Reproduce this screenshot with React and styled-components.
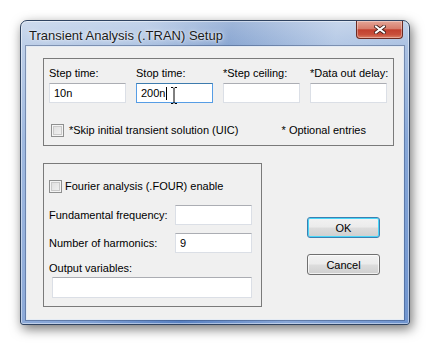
import React from 'react'
import styled, { createGlobalStyle } from 'styled-components'

const Global = createGlobalStyle`
  html, body {
    margin: 0;
    padding: 0;
    background: #ffffff;
  }
  body {
    font-family: "Liberation Sans", Arial, sans-serif;
    font-size: 11px;
    color: #000;
  }
`

const Page = styled.div`
  width: 430px;
  height: 346px;
  padding: 20px 0 0 20px;
  box-sizing: border-box;
`

const Window = styled.div`
  width: 390px;
  height: 305px;
  box-sizing: border-box;
  display: flex;
  flex-direction: column;
  padding: 0 5px 4px 5px;
  border: 1px solid #2f4361;
  border-radius: 7px 7px 3px 3px;
  background:
    linear-gradient(100deg, rgba(255, 255, 255, 0.35) 0%, rgba(255, 255, 255, 0.2) 28%, rgba(40, 80, 150, 0.15) 48%, rgba(255, 255, 255, 0.25) 72%, rgba(255, 255, 255, 0.1) 100%),
    linear-gradient(to bottom, #b4c8e5 0px, #9ab5dc 26px, #7399d2 120px, #5f88c9 100%);
  box-shadow: 2px 4px 12px rgba(0, 0, 0, 0.55), inset 0 0 0 1px rgba(255, 255, 255, 0.45);
`

const TitleBar = styled.div`
  height: 25px;
  display: flex;
  align-items: flex-start;
  justify-content: space-between;
`

const Title = styled.div`
  font-size: 13px;
  line-height: 13px;
  margin: 8px 0 0 3px;
  color: #1a1a1a;
  text-shadow: 0 0 6px rgba(255, 255, 255, 0.9), 0 0 2px rgba(255, 255, 255, 0.9);
`

const CloseButton = styled.div`
  width: 47px;
  height: 18px;
  box-sizing: border-box;
  margin-right: 1px;
  display: flex;
  align-items: center;
  justify-content: center;
  border: 1px solid #6b2a22;
  border-top: none;
  border-radius: 0 0 4px 4px;
  background: linear-gradient(to bottom, #e4a597 0%, #d77d6c 45%, #c2402f 52%, #c8503c 80%, #dd8066 100%);
  box-shadow: inset 0 0 0 1px rgba(255, 255, 255, 0.35);
`

const Client = styled.div`
  flex: 1;
  display: flex;
  flex-direction: column;
  background: #f0f0f0;
  border: 1px solid #e4ebf4;
  box-shadow: 0 0 0 1px rgba(40, 60, 100, 0.4);
  padding: 11px 0 0 16px;
`

const Group = styled.div`
  width: ${p => p.$w}px;
  height: ${p => p.$h}px;
  box-sizing: border-box;
  border: 1px solid #7a7a7a;
  padding: ${p => p.$pad};
  display: flex;
  flex-direction: column;
`

const FieldGrid = styled.div`
  display: grid;
  grid-template-columns: repeat(4, 77px);
  column-gap: 10px;
`

const Field = styled.div`
  display: flex;
  flex-direction: column;
`

const Label = styled.div`
  line-height: 14px;
  white-space: nowrap;
  margin-bottom: ${p => p.$mb || 0}px;
`

const InputWrap = styled.div`
  position: relative;
`

const Input = styled.div`
  width: ${p => p.$w || 77}px;
  height: ${p => p.$h || 20}px;
  box-sizing: border-box;
  background: #fff;
  border: 1px solid ${p => (p.$focus ? '#569de5' : '#dbdfe6')};
  border-top-color: ${p => (p.$focus ? '#3d7bad' : '#abadb3')};
  padding: 0 4px;
  display: flex;
  align-items: center;
  line-height: 14px;
  margin-left: ${p => p.$ml || 0}px;
`

const Caret = styled.span`
  display: inline-block;
  width: 1px;
  height: 13px;
  background: #000;
  margin-left: 1px;
`

const Cursor = styled.svg`
  position: absolute;
  left: 34px;
  top: 4px;
`

const CheckRow = styled.div`
  display: flex;
  align-items: center;
  justify-content: space-between;
  margin-top: ${p => p.$mt}px;
  padding-left: ${p => p.$pl || 0}px;
  padding-right: ${p => p.$pr || 0}px;
`

const CheckLabel = styled.label`
  display: flex;
  align-items: center;
  gap: ${p => p.$gap}px;
  line-height: 14px;
  white-space: nowrap;
`

const Box = styled.span`
  width: 13px;
  height: 13px;
  box-sizing: border-box;
  border: 1px solid #8e8f8f;
  background: linear-gradient(135deg, #dcdcdc 0%, #f4f4f4 100%);
  box-shadow: inset 0 0 0 1px #f4f4f4, inset 0 0 0 2px #c9c9c9;
`

const LowerRow = styled.div`
  display: flex;
  margin-top: 17px;
`

const FormRow = styled.div`
  display: flex;
  align-items: center;
  justify-content: space-between;
  margin-top: ${p => p.$mt}px;
`

const ButtonColumn = styled.div`
  display: flex;
  flex-direction: column;
  gap: 16px;
  margin: 54px 0 0 45px;
`

const Button = styled.div`
  width: 73px;
  height: 21px;
  box-sizing: border-box;
  display: flex;
  align-items: center;
  justify-content: center;
  border: 1px solid ${p => (p.$default ? '#3c7fb1' : '#707070')};
  border-radius: 3px;
  background: linear-gradient(to bottom, #f2f2f2 0%, #ebebeb 49%, #dddddd 51%, #cfcfcf 100%);
  box-shadow: inset 0 0 0 1px ${p => (p.$default ? '#48d6f8' : 'rgba(255, 255, 255, 0.7)')};
  font-size: 11px;
`

const App = () => {
  return (
    <Page>
      <Global />
      <Window>
        <TitleBar>
          <Title>Transient Analysis (.TRAN) Setup</Title>
          <CloseButton>
            <svg width="12" height="9" viewBox="0 0 12 9">
              <path d="M2 1.5 L10 7.5 M10 1.5 L2 7.5" stroke="#3b1a16" strokeWidth="3.6" strokeLinecap="square" />
              <path d="M2 1.5 L10 7.5 M10 1.5 L2 7.5" stroke="#ffffff" strokeWidth="2" strokeLinecap="square" />
            </svg>
          </CloseButton>
        </TitleBar>
        <Client>
          <Group $w={351} $h={88} $pad="7px 0 0 5px">
            <FieldGrid>
              <Field>
                <Label $mb={3}>Step time:</Label>
                <Input>10n</Input>
              </Field>
              <Field>
                <Label $mb={3}>Stop time:</Label>
                <InputWrap>
                  <Input $focus>200n<Caret /></Input>
                  <Cursor width="8" height="17" viewBox="0 0 8 17">
                    <path d="M1 0.5 H3 L4 1.5 L5 0.5 H7 M4 1.5 V15.5 M1 16.5 H3 L4 15.5 L5 16.5 H7" stroke="#000" strokeWidth="1" fill="none" />
                  </Cursor>
                </InputWrap>
              </Field>
              <Field>
                <Label $mb={3}>*Step ceiling:</Label>
                <Input />
              </Field>
              <Field>
                <Label $mb={3}>*Data out delay:</Label>
                <Input />
              </Field>
            </FieldGrid>
            <CheckRow $mt={20} $pl={2} $pr={27}>
              <CheckLabel $gap={5}>
                <Box />
                *Skip initial transient solution (UIC)
              </CheckLabel>
              <span>* Optional entries</span>
            </CheckRow>
          </Group>
          <LowerRow>
            <Group $w={219} $h={144} $pad="15px 9px 0 5px">
              <CheckRow $mt={0}>
                <CheckLabel $gap={3}>
                  <Box />
                  Fourier analysis (.FOUR) enable
                </CheckLabel>
              </CheckRow>
              <FormRow $mt={12}>
                <Label>Fundamental frequency:</Label>
                <Input $h={20} />
              </FormRow>
              <FormRow $mt={8}>
                <Label>Number of harmonics:</Label>
                <Input $h={20}>9</Input>
              </FormRow>
              <Label style={{ marginTop: 8, marginBottom: 2 }}>Output variables:</Label>
              <Input $w={200} $h={21} $ml={3} />
            </Group>
            <ButtonColumn>
              <Button $default>OK</Button>
              <Button>Cancel</Button>
            </ButtonColumn>
          </LowerRow>
        </Client>
      </Window>
    </Page>
  )
}

export default App
